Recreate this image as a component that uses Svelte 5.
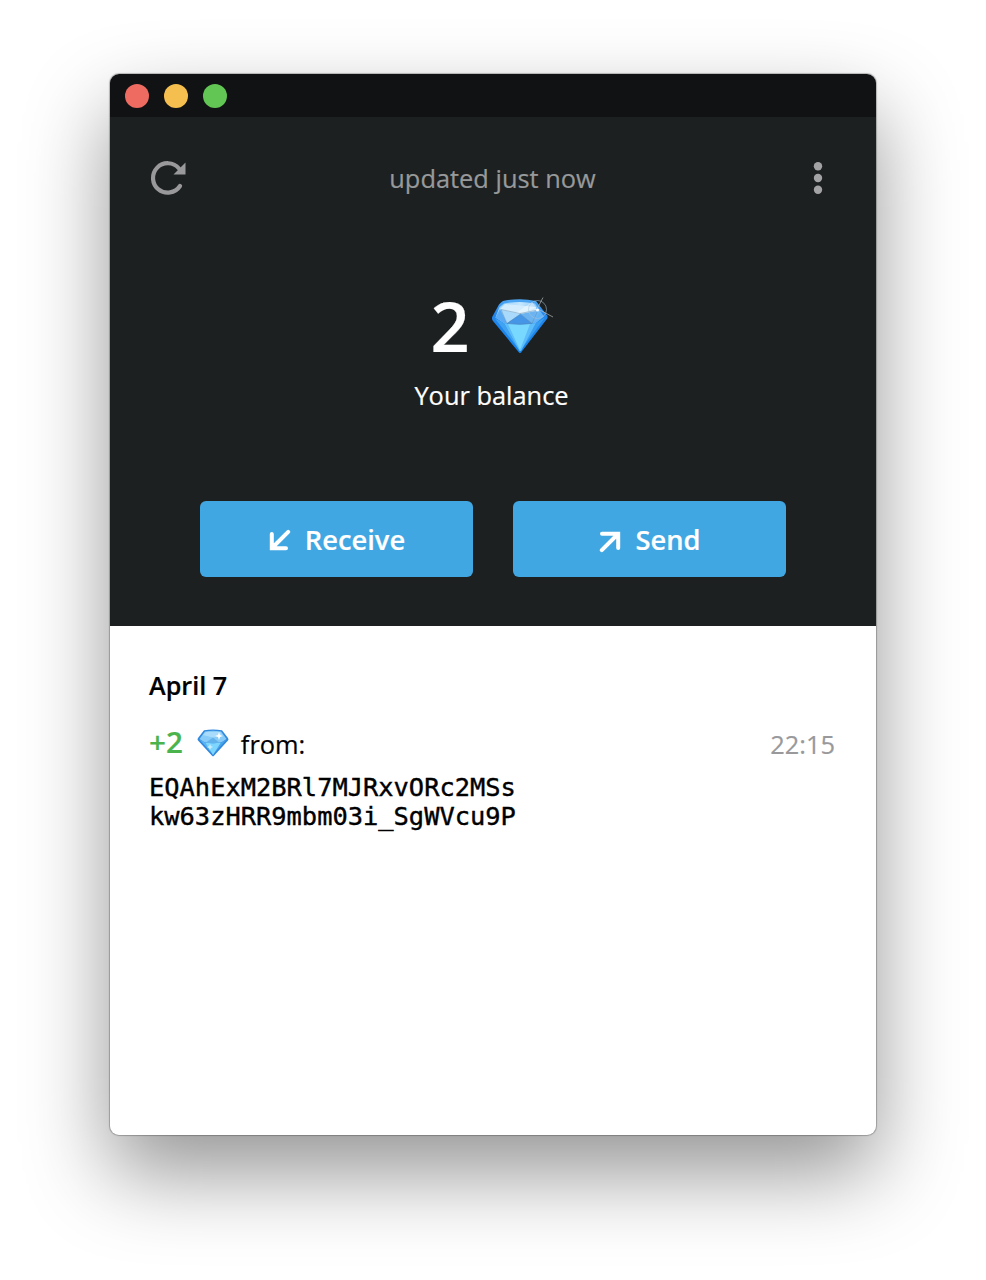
<script lang="ts">
	interface Transaction {
		id: number;
		amount: string;
		time: string;
		address: string[];
	}

	interface Day {
		date: string;
		transactions: Transaction[];
	}

	let balance = $state('2');
	let status = $state('updated just now');

	const days: Day[] = [
		{
			date: 'April 7',
			transactions: [
				{
					id: 1,
					amount: '+2',
					time: '22:15',
					address: ['EQAhExM2BRl7MJRxvORc2MSs', 'kw63zHRR9mbm03i_SgWVcu9P']
				}
			]
		}
	];

	function refresh() {
		status = 'updated just now';
	}
</script>

<div class="desktop">
	<div class="window">
		<div class="titlebar">
			<span class="light close"></span>
			<span class="light minimize"></span>
			<span class="light zoom"></span>
		</div>

		<header class="header">
			<div class="toolbar">
				<button class="icon-btn" aria-label="Refresh" onclick={refresh}>
					<svg width="36" height="36" viewBox="0 0 36 36">
						<path d="M30 26A14.700 14.700 0 1 1 29 8.500" fill="none" stroke="#99999b" stroke-width="4.2" stroke-linecap="round" />
						<path d="M35.500 2.500V14.500H23.500Z" fill="#99999b" />
					</svg>
				</button>
				<span class="status">{status}</span>
				<button class="icon-btn menu" aria-label="Menu">
					<svg width="10" height="34" viewBox="0 0 10 34">
						<circle cx="5" cy="5.2" r="4.2" fill="#a3a3a5" />
						<circle cx="5" cy="17" r="4.2" fill="#a3a3a5" />
						<circle cx="5" cy="28.7" r="4.2" fill="#a3a3a5" />
					</svg>
				</button>
			</div>

			<div class="balance">
				<span class="balance-value">{balance}</span>
				<svg class="balance-gem" width="64" height="60" viewBox="0 0 64 60">
					<defs>
						<linearGradient id="gem-edge" x1="0" y1="0" x2="0" y2="1">
							<stop offset="0" stop-color="#4fa8f4" />
							<stop offset="0.3" stop-color="#2385ea" />
							<stop offset="1" stop-color="#1684e8" />
						</linearGradient>
						<linearGradient id="gem-top" x1="0" y1="0" x2="1" y2="0.3">
							<stop offset="0" stop-color="#85c9fb" />
							<stop offset="0.5" stop-color="#c5e7fd" />
							<stop offset="1" stop-color="#62b2f5" />
						</linearGradient>
					</defs>
					<path d="M13 4Q30 0.500 46 4L56 17Q59 19.500 56.500 22.500L31 55.500Q30 56.500 29 55.500L3 24Q1 21 3 18.500L9 7.500Q11 5 13 4Z" fill="url(#gem-edge)" />
					<path d="M14 6.500Q30 3.500 45 6.500L54 19.500L46 26Q30 28 14 26L5.500 20.500L9.500 10Z" fill="url(#gem-top)" />
					<path d="M5 21.500L14 26L28.500 52Z" fill="#3fa3f2" />
					<path d="M55 20.500L46 26L31.500 52Z" fill="#399eef" />
					<path d="M14 26Q30 28.500 46 26L31 54H29.500Z" fill="#5dbcfa" />
					<path d="M18 27L30 53L40 27Q30 28.500 18 27Z" fill="#79d8ff" />
					<path d="M5.500 20.500L10 12L17 26.300L14 26Z" fill="#5aabf4" />
					<path d="M12 13L30.500 17L17 26.300Z" fill="#a9dafc" />
					<path d="M17 26.300L30.500 17L42 26.500Q30 28 17 26.300Z" fill="#4596e6" />
					<path d="M30.500 17L46 14L42 26.500Z" fill="#6bb3f1" />
					<path d="M10 12L15 7L46 10L46 14L30 17L12 13Z" fill="#d3edfe" />
					<path d="M26 16L42 5L46 10L34 16Z" fill="#fff" opacity="0.4" />
					<path d="M11 12.500L30 16.500L48 13L42 26.500Q30 28 17 26.500Z M17 26.500L30.500 17L42 26.500" fill="none" stroke="#527fa0" stroke-width="0.7" opacity="0.6" />
					<circle cx="47.500" cy="12.500" r="9" fill="none" stroke="#a6c3d8" stroke-width="0.9" opacity="0.6" />
					<path d="M53 0.500L46 14M48 12L63 20" fill="none" stroke="#c0c7c9" stroke-width="0.9" opacity="0.7" />
					<circle cx="47.500" cy="13" r="1.500" fill="#fff" />
				</svg>
			</div>
			<div class="balance-label">Your balance</div>

			<div class="actions">
				<button class="btn">
					<svg class="arrow receive" width="22" height="22" viewBox="0 0 22 22">
						<path d="M19.200 2.800L3.500 18.500M2.800 5V19.200H17" />
					</svg>
					Receive
				</button>
				<button class="btn">
					<svg class="arrow send" width="22" height="22" viewBox="0 0 22 22">
						<path d="M2.800 19.200L18.500 3.500M3 2.800H19.200V17" />
					</svg>
					Send
				</button>
			</div>
		</header>

		<main class="history">
			{#each days as day}
				<h2>{day.date}</h2>
				{#each day.transactions as tx (tx.id)}
					<div class="tx-row">
						<span class="amount">{tx.amount}</span>
						<svg class="tx-gem" width="32" height="28" viewBox="0 0 32 28">
							<path d="M7 1.200Q16 0 25 1.200L31 9Q32 10.500 31 11.500L17 26.800Q16 27.800 15 26.800L1 11.500Q0 10.300 1 9Z" fill="#3289dc" />
							<path d="M8 2.500Q16 1.200 24 2.500L29.500 10L25 13Q16 15 7 13L2.500 10Z" fill="#87ccf8" />
							<path d="M2.500 10.500L8 13.500L15 24.500Z" fill="#58b5f2" />
							<path d="M29.500 10.500L24 13.500L17 24.500Z" fill="#48a5e9" />
							<path d="M8 13.500Q16 15 24 13.500L16 26Z" fill="#7dd6ff" />
							<path d="M9 13.500L16 8.500L22 13.500Q16 15 9 13.500Z" fill="#62b2eb" />
							<path d="M6 6L9 3H23L25 6L16 8.500Z" fill="#a9dcfb" />
							<path d="M22 3L23 6L26 7L23 8L22 11L21 8L18 7L21 6Z" fill="#fff" />
							<path d="M13 15L14 17L16 18L14 19L13 21L12 19L10 18L12 17Z" fill="#c5edff" />
						</svg>
						<span class="from">from:</span>
						<span class="time">{tx.time}</span>
					</div>
					<div class="address">
						{#each tx.address as line}
							<div>{line}</div>
						{/each}
					</div>
				{/each}
			{/each}
		</main>
	</div>
</div>

<style>
	:global(body) {
		margin: 0;
		background: #fff;
	}

	.desktop {
		display: flex;
		justify-content: center;
		align-items: flex-start;
		box-sizing: border-box;
		height: 100vh;
		padding-top: 74px;
		overflow: hidden;
		background: #fff;
	}

	.window {
		display: flex;
		flex-direction: column;
		width: 766px;
		height: 1061px;
		border-radius: 9px;
		overflow: hidden;
		background: #fff;
		font-family: 'Open Sans', 'Noto Sans', sans-serif;
		font-size: 25.4px;
		color: #000;
		-webkit-text-stroke: 0.2px currentColor;
		box-shadow:
			0 0 1px 1px rgba(0, 0, 0, 0.25),
			0 38px 84px rgba(0, 0, 0, 0.42);
	}

	button {
		border: none;
		padding: 0;
		font-family: inherit;
		cursor: pointer;
	}

	svg {
		display: block;
		flex: none;
	}

	/* Title bar */
	.titlebar {
		display: flex;
		gap: 15px;
		align-items: center;
		height: 43px;
		padding-left: 15px;
		background: #101213;
	}

	.light {
		width: 24px;
		height: 24px;
		border-radius: 50%;
	}

	.close {
		background: #ed6b60;
	}

	.minimize {
		background: #f5bf50;
	}

	.zoom {
		background: #62c655;
	}

	/* Header */
	.header {
		display: flex;
		flex-direction: column;
		align-items: center;
		box-sizing: border-box;
		height: 509px;
		padding-top: 42px;
		background: #1d2021;
	}

	.toolbar {
		display: flex;
		justify-content: space-between;
		align-items: center;
		box-sizing: border-box;
		width: 100%;
		height: 38px;
		padding: 0 53px 0 40px;
	}

	.icon-btn {
		background: none;
	}

	.status {
		margin-right: 14px;
		color: #97999a;
		line-height: 38px;
	}

	.balance {
		display: flex;
		align-items: center;
		gap: 20px;
		height: 100px;
		margin: 79px 2px 0 0;
	}

	.balance-value {
		color: #fff;
		font-size: 68.5px;
		font-weight: 600;
		line-height: 100px;
	}

	.balance-gem {
		margin-top: 2px;
	}

	.balance-label {
		margin: 1px 3px 0 0;
		color: #fff;
		line-height: 36px;
	}

	.actions {
		display: flex;
		gap: 39.5px;
		margin-top: 88px;
	}

	.btn {
		display: flex;
		justify-content: center;
		align-items: center;
		gap: 14px;
		box-sizing: border-box;
		width: 273.5px;
		height: 76px;
		padding-left: 1px;
		border-radius: 6px;
		background: #40a7e3;
		color: #fff;
		font-size: 27.3px;
		font-weight: 600;
	}

	.arrow {
		margin-top: 1px;
		fill: none;
		stroke: #fff;
		stroke-width: 4;
		stroke-linecap: round;
	}

	.send {
		margin-top: 6px;
	}

	/* History */
	.history {
		padding: 41px 41px 0 39px;
	}

	h2 {
		margin: 0;
		font-size: 25.2px;
		font-weight: 600;
		line-height: 36px;
	}

	.tx-row {
		display: flex;
		align-items: center;
		height: 40px;
		margin-top: 21px;
	}

	.amount {
		margin-top: -6px;
		color: #4bb34b;
		font-size: 29.6px;
		font-weight: 600;
	}

	.tx-gem {
		margin: -2px 12px 0 14px;
	}

	.time {
		margin-left: auto;
		color: #99999b;
	}

	.address {
		margin-top: 9px;
		font-family: 'DejaVu Sans Mono', monospace;
		font-size: 25.4px;
		line-height: 29px;
		-webkit-text-stroke: 0.4px currentColor;
	}
</style>
